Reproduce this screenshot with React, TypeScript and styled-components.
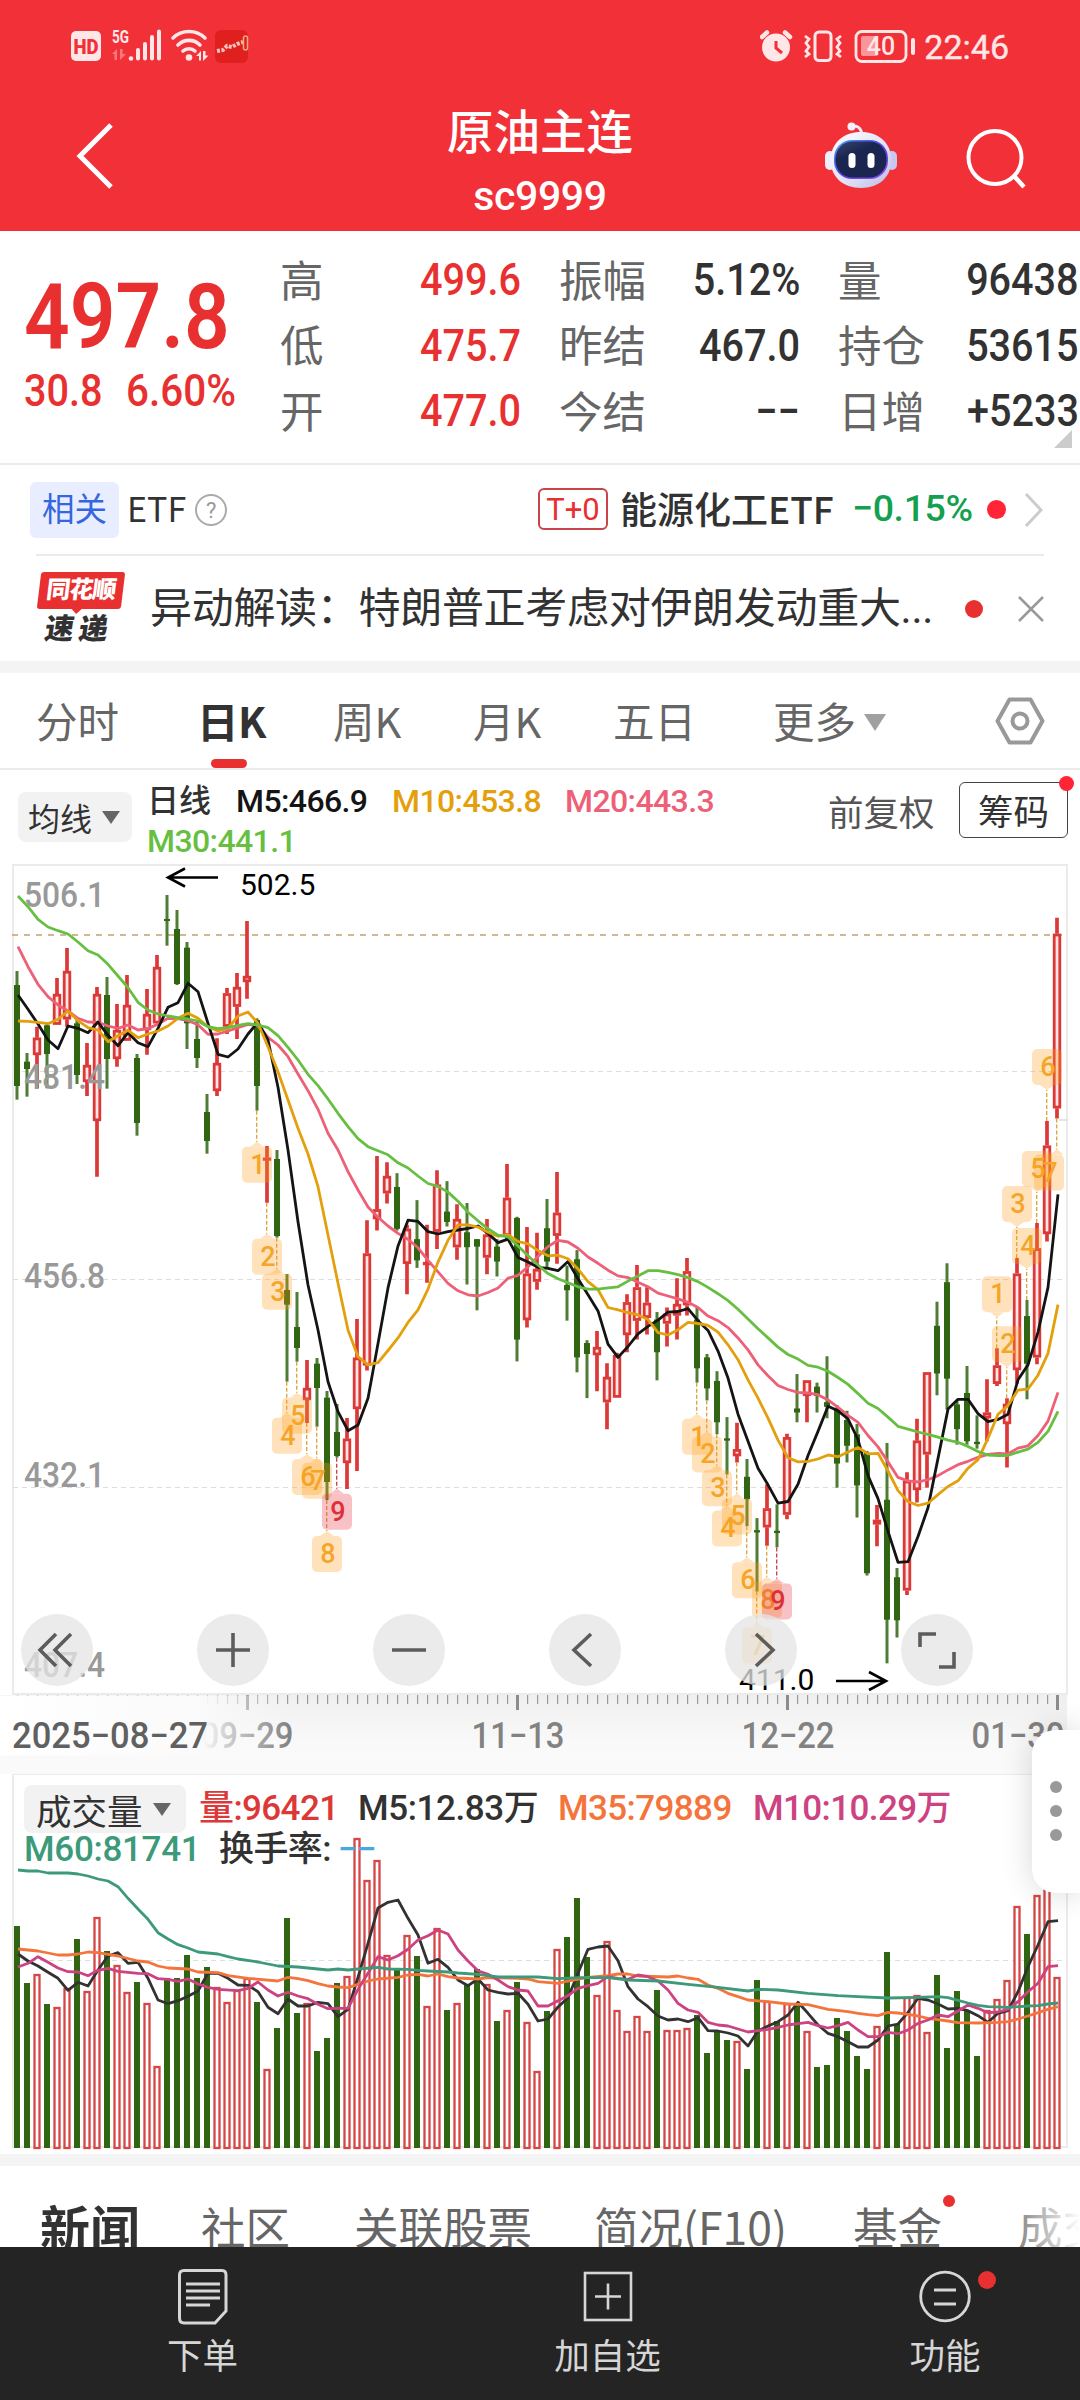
import React from 'react';
import styled, { createGlobalStyle, css } from 'styled-components';

const GlobalStyle = createGlobalStyle`
  * {
    box-sizing: border-box;
  }

  body {
    margin: 0;
    background: #fff;
    font-family: Roboto, 'Noto Sans CJK SC', sans-serif;
    color: #323232;
  }
`;

const colors = {
  brand: '#f23038',
  red: '#e93030',
  candleRed: '#dc3838',
  candleGreen: '#306612',
  down: '#15a050',
  text: '#323232',
  muted: '#666',
  line: '#ebebeb',
  band: '#f4f4f4',
  m5: '#141414',
  m10: '#e3a00c',
  m20: '#ee6077',
  m30: '#67bf42',
  vol5: '#323232',
  vol35: '#f4743b',
  vol10: '#cd4280',
  vol60: '#3c9a7a',
};

/* ---------- chart data ---------- */

type Candle = { up: boolean; high: number; top: number; bottom: number; low: number };

const EARLY_UNIT = 1 / 3;
const LATE_UNIT = 900 / 1568;
// number of sessions stored in the finer unit
const SPLIT = 35;

const EARLY_CANDLES = `G 363 405 708 749|G 609 635 657 740|R 530 563 615 715|G 520 526 612 715|R 384 432 524 524
R 294 363 508 530|G 510 520 675 702|R 579 645 696 738|R 411 432 813 980|G 381 435 627 716
R 462 540 627 650|R 375 465 572 572|G 612 624 819 857|R 417 492 540 614|R 315 351 520 520
G 135 207 213 287|G 180 237 402 405|G 276 293 520 597|G 515 567 624 654|G 732 786 873 911
R 565 639 723 738|R 414 430 530 552|R 369 411 470 567|R 213 378 396 446|G 505 510 708 782
R 888 923 931 1058|G 900 927 1158 1163|G 1272 1320 1364 1595|G 1326 1431 1494 1535|R 1530 1614 1650 1719
G 1524 1541 1614 1730|G 1623 1643 1896 1950|G 1662 1746 1818 1823|R 1704 1766 1839 1917|R 1407 1523 1677 1863`;

const LATE_CANDLES = `R 645 703 898 907|R 533 626 643 663|R 544 568 598 616|G 563 587 660 663|R 653 660 721 774
G 610 678 715 728|R 653 718 723 754|R 558 583 665 695|G 577 630 648 656|R 617 643 692 714
G 615 666 692 757|G 678 678 691 802|R 643 670 710 739|G 678 691 717 743|R 547 606 672 680
G 639 641 853 891|R 657 738 819 832|R 667 730 752 766|G 608 659 717 728|R 561 632 672 721
G 724 758 767 820|G 697 713 884 910|G 854 859 878 955|R 838 866 880 943|R 894 918 962 1009
R 876 880 954 954|R 774 788 845 875|R 723 762 820 853|R 762 789 815 844|G 805 818 875 924
R 797 808 825 865|R 746 791 811 853|R 711 734 793 811|G 797 818 903 928|G 878 884 938 959
G 908 925 997 1018|G 988 1025 1029 1088|R 998 1044 1056 1067|G 1061 1092 1131 1178|G 1164 1185 1189 1292
R 1105 1147 1180 1212|G 1140 1186 1190 1215|R 1017 1023 1158 1166|G 913 973 980 997|R 924 924 951 997
G 928 935 951 980|G 882 962 970 990|G 967 972 1069 1111|G 977 993 1038 1067|G 1000 1018 1107 1163
G 1047 1050 1260 1264|R 1141 1167 1175 1213|G 1033 1132 1341 1417|G 1251 1267 1342 1372|R 1084 1099 1290 1298
R 991 1029 1115 1137|R 910 910 1053 1111|G 787 829 912 950|G 720 753 921 975|G 958 966 1009 1036
G 899 946 1030 1036|G 985 1031 1035 1043|R 922 980 990 1030|R 868 898 930 934|R 955 965 1000 1076
R 711 738 906 930|G 784 812 895 957|R 650 694 884 896|R 472 515 669 682|R 118 146 450 468`;

const parseCandles = (source: string, unit: number): Candle[] =>
  source.split(/[|\n]/).map((row) => {
    const [side, ...values] = row.trim().split(' ');
    const [high, top, bottom, low] = values.map((v) => Number(v) * unit);
    return { up: side === 'R', high, top, bottom, low };
  });

const CANDLES = [...parseCandles(EARLY_CANDLES, EARLY_UNIT), ...parseCandles(LATE_CANDLES, LATE_UNIT)];

const AVERAGES = [
  {
    color: colors.m20,
    values: [
      290, 350, 403, 440, 465, 483, 505, 516, 517, 528, 535, 525, 540, 536, 522, 505, 506, 512, 524, 553, 552, 543, 533,
      523, 528, 562, 585, 620, 672, 722, 778, 850, 900, 965, 1020, 622, 640, 655, 668, 678, 693, 715, 735, 755, 768,
      775, 777, 771, 763, 746, 741, 726, 708, 691, 680, 683, 694, 709, 720, 732, 742, 745, 753, 761, 772, 777, 782, 788,
      797, 812, 820, 832, 850, 871, 897, 916, 933, 940, 945, 946, 949, 958, 971, 985, 997, 1020, 1040, 1066, 1093, 1099,
      1101, 1097, 1090, 1080, 1071, 1065, 1058, 1053, 1051, 1052, 1042, 1038, 1020, 995, 945,
    ],
  },
  {
    color: colors.m5,
    values: [
      435, 478, 522, 570, 596, 528, 535, 548, 516, 556, 587, 548, 578, 590, 535, 472, 458, 400, 425, 520, 613, 621, 597,
      552, 517, 570, 712, 900, 1115, 1305, 1440, 1595, 1685, 1742, 1725, 955, 860, 763, 690, 645, 647, 665, 669, 665,
      662, 659, 655, 668, 684, 678, 710, 718, 727, 729, 733, 717, 747, 775, 803, 861, 884, 865, 843, 830, 819, 805, 804,
      799, 820, 837, 873, 920, 983, 1030, 1077, 1106, 1138, 1135, 1105, 1055, 1013, 969, 977, 991, 1027, 1090, 1130,
      1187, 1241, 1240, 1196, 1146, 1060, 974, 957, 957, 982, 996, 992, 983, 923, 897, 840, 762, 600,
    ],
  },
  {
    color: colors.m10,
    values: [
      513, 514, 517, 521, 508, 483, 512, 533, 540, 575, 557, 541, 563, 552, 543, 528, 505, 490, 505, 530, 543, 535, 498,
      486, 520, 590, 665, 750, 835, 912, 1010, 1155, 1300, 1440, 1520, 897, 893, 872, 850, 823, 801, 765, 718, 680, 653,
      653, 657, 666, 673, 670, 682, 686, 698, 707, 706, 712, 730, 752, 766, 797, 801, 806, 810, 818, 841, 845, 836, 823,
      825, 828, 840, 862, 888, 923, 955, 990, 1028, 1059, 1066, 1065, 1061, 1054, 1057, 1049, 1041, 1052, 1051, 1082,
      1116, 1135, 1142, 1138, 1123, 1109, 1099, 1077, 1062, 1025, 983, 968, 941, 939, 915, 877, 792,
    ],
  },
  {
    color: colors.m30,
    values: [
      138, 170, 208, 231, 242, 252, 276, 302, 315, 343, 378, 413, 457, 480, 492, 498, 503, 507, 513, 530, 536, 533, 526,
      521, 525, 533, 557, 592, 630, 673, 707, 747, 790, 830, 866, 517, 524, 531, 545, 554, 568, 581, 586, 596, 612, 631,
      646, 660, 671, 674, 690, 707, 723, 738, 747, 754, 761, 765, 765, 763, 761, 751, 742, 733, 733, 736, 740, 745, 752,
      762, 773, 785, 800, 817, 834, 850, 866, 879, 887, 898, 901, 908, 919, 931, 947, 964, 973, 988, 1004, 1009, 1014,
      1018, 1023, 1028, 1032, 1039, 1048, 1054, 1055, 1055, 1049, 1044, 1032, 1013, 978,
    ],
  },
];

const VOLUMES = [
  498, 669, 642, 732, 741, 684, 537, 693, 471, 573, 615, 696, 666, 729, 918, 654, 654, 585, 654, 621, 681, 726, 690,
  654, 726, 927, 804, 474, 759, 729, 873, 834, 669, 648, 234, 360, 300, 585, 627, 525, 588, 738, 504, 750, 729, 672,
  627, 672, 783, 750, 666, 786, 933, 753, 567, 531, 414, 591, 705, 543, 750, 813, 768, 813, 690, 810, 810, 804, 765,
  879, 816, 840, 843, 927, 660, 723, 783, 729, 732, 813, 921, 915, 774, 813, 888, 927, 798, 576, 792, 711, 705, 816,
  645, 864, 693, 750, 888, 750, 717, 660, 438, 522, 405, 384, 651,
];

// "session,value" pairs
const VOLUME_LINES = [
  {
    color: colors.vol5,
    points:
      '0,582 1,603 2,618 3,637 4,655 5,691 6,667 7,678 8,630 9,588 10,578 11,610 12,607 13,655 14,720 15,731 16,722 17,709 18,693 19,640 20,640 21,655 22,675 23,676 24,695 25,742 26,761 27,717 28,738 29,738 30,727 31,731 32,770 33,748 34,652 35,550 36,444 37,427 38,420 39,475 40,525 41,610 42,598 43,622 44,660 45,677 46,657 47,690 48,697 49,702 50,700 51,733 52,783 53,777 54,741 55,713 56,640 57,568 58,561 59,558 60,602 61,680 62,717 63,740 64,768 65,780 66,777 67,785 68,773 69,812 70,813 71,819 72,828 73,858 74,813 75,798 76,785 77,765 78,727 79,760 80,795 81,820 82,830 83,845 84,861 85,861 86,840 87,798 88,792 89,757 90,715 91,720 92,732 93,747 94,745 95,752 96,767 97,787 98,760 99,752 100,695 101,620 102,555 103,485 104,482',
  },
  {
    color: colors.vol35,
    points:
      '0,567 2,573 4,585 5,585 6,582 7,576 8,578 9,583 10,588 12,603 13,606 14,618 15,624 17,627 18,636 20,638 21,647 23,655 26,663 27,652 28,656 29,662 30,671 31,678 32,681 33,683 34,673 35,663 36,657 38,652 39,645 40,643 41,648 42,642 43,650 44,654 46,657 47,653 50,655 51,657 52,665 54,670 55,663 57,652 59,647 60,642 61,642 62,648 65,651 66,648 67,654 68,658 69,675 70,685 71,700 72,710 73,720 75,725 77,732 79,734 81,748 83,755 84,760 85,764 86,767 87,757 88,759 89,763 90,768 91,775 93,783 94,788 96,789 98,787 99,785 100,777 101,768 102,758 103,748 104,740',
  },
  {
    color: colors.vol10,
    points:
      '0,621 1,610 2,590 3,607 4,624 5,635 6,636 7,647 8,631 9,625 10,634 12,640 13,641 14,656 15,658 16,664 17,657 18,672 19,682 20,688 22,692 23,685 24,666 25,690 26,708 27,697 28,708 29,716 30,733 31,746 32,745 33,745 34,688 35,640 36,590 37,600 38,587 39,568 40,540 41,527 42,510 43,522 44,570 45,603 46,632 47,643 48,660 49,680 50,690 51,693 52,738 53,738 54,722 55,707 56,685 57,677 58,670 59,650 60,655 61,658 62,645 63,650 64,663 65,690 66,730 67,750 68,757 69,787 70,795 71,798 72,807 73,816 74,812 75,808 76,802 77,795 78,791 79,787 80,797 81,804 82,797 83,787 84,810 85,830 86,830 87,817 88,821 89,810 90,790 91,780 92,765 93,770 94,753 95,735 96,745 97,758 98,756 99,748 100,725 101,695 102,670 103,620 104,617',
  },
  {
    color: colors.vol60,
    points:
      '0,330 1,333 2,333 3,339 5,339 6,342 7,348 8,357 9,363 10,380 11,415 12,447 13,478 14,518 15,537 16,554 17,564 18,576 20,582 21,590 22,597 24,606 25,612 26,618 28,621 30,627 31,630 32,627 33,630 34,627 36,622 37,627 39,628 40,631 41,633 43,636 44,639 46,643 48,651 52,651 54,656 56,653 59,653 61,660 64,663 67,673 70,682 73,693 74,688 76,690 79,700 82,707 84,710 87,714 90,712 92,710 93,713 94,721 95,729 96,736 97,740 99,742 101,738 102,737 103,732 104,729',
  },
];

type Marker = { index: number; label: string; above?: boolean; hot?: boolean };

const MARKERS: Marker[] = [
  ...[24, 25, 26, 27, 28, 29, 30, 31, 32].map((index, n) => ({ index, label: String(n + 1), hot: n === 8 })),
  ...[68, 69, 70, 71, 72, 73, 74, 75, 76].map((index, n) => ({ index, label: String(n + 1), hot: n === 8 })),
  ...[98, 99, 100, 101, 102, 103].map((index, n) => ({ index, label: String(n + 1), above: true })),
  { index: 104, label: '7' },
];

const xAt = (index: number) => 17 + index * 10;

/* ---------- header ---------- */

const Page = styled.div`
  position: relative;
  display: flex;
  flex-direction: column;
  width: 1080px;
  height: 2400px;
  overflow: hidden;
  background: #fff;
`;

const Header = styled.header`
  height: 231px;
  background: ${colors.brand};
  color: #fff;
`;

const StatusBar = styled.div`
  display: flex;
  align-items: center;
  justify-content: space-between;
  height: 94px;
  padding: 0 71px 0 71px;
`;

const StatusGroup = styled.div<{ $gap: number }>`
  display: flex;
  align-items: center;
  gap: ${({ $gap }) => $gap}px;
`;

const Clock = styled.span`
  font-size: 34px;
  line-height: 34px;
  color: #ffe6e7;
  -webkit-text-stroke: 0.4px #ffe6e7;
`;

const TitleBar = styled.div`
  display: grid;
  grid-template-columns: 360px 360px 360px;
  height: 137px;
`;

const TitleBlock = styled.div`
  display: flex;
  flex-direction: column;
  align-items: center;
`;

const Title = styled.h1`
  margin: 11px 0 0;
  font-size: 46.5px;
  line-height: 56px;
  font-weight: 500;
`;

const Code = styled.div`
  margin-top: 12px;
  font-size: 41px;
  line-height: 46px;
  font-weight: 500;
  letter-spacing: -0.4px;
`;

const BackSlot = styled.div`
  padding: 27px 0 0 74px;
`;

const ActionSlot = styled.div`
  display: flex;
  gap: 66px;
  padding: 27px 0 0 104px;
`;

/* ---------- quote ---------- */

const Quote = styled.section`
  position: relative;
  display: grid;
  grid-template-columns: 255px 266px 279px 279px;
  width: 1080px;
  height: 232px;
  padding-top: 17px;
`;

const PriceBlock = styled.div`
  padding: 19px 0 0 24px;
  color: ${colors.red};
  white-space: nowrap;
`;

const Figure = styled.span<{ $align?: 'left' | 'right'; $squeeze?: number }>`
  display: inline-block;
  transform: scaleX(${({ $squeeze }) => $squeeze ?? 0.91});
  transform-origin: ${({ $align }) => $align ?? 'left'} center;
`;

const LastPrice = styled.div`
  height: 102px;
  font-size: 90px;
  line-height: 102px;
  font-weight: 600;
`;

const Change = styled.div`
  display: flex;
  margin-top: -2px;
  font-size: 43.5px;
  line-height: 50px;
  font-weight: 500;

  span + span {
    margin-left: 16px;
  }
`;

const StatColumn = styled.div<{ $indent: number }>`
  display: flex;
  flex-direction: column;
  padding-left: ${({ $indent }) => $indent}px;
`;

const Stat = styled.div`
  display: flex;
  align-items: center;
  justify-content: space-between;
  height: 65.5px;
  white-space: nowrap;
`;

const StatLabel = styled.span`
  color: ${colors.muted};
  font-family: 'Noto Sans CJK SC', sans-serif;
  font-size: 43.5px;
  line-height: 60px;
  margin-top: -4px;
`;

const StatValue = styled(Figure)<{ $up?: boolean }>`
  margin-top: 1px;
  color: ${({ $up }) => ($up ? colors.red : colors.text)};
  font-size: 43.5px;
  font-weight: 500;
  line-height: 52px;
`;

const Corner = styled.i`
  position: absolute;
  right: 8px;
  bottom: 15px;
  border-left: 18px solid transparent;
  border-bottom: 18px solid #ccc;
`;

/* ---------- related rows ---------- */

const EtfRow = styled.section`
  display: flex;
  align-items: center;
  height: 91px;
  padding: 0 36px 0 30px;
  border-top: 2px solid ${colors.line};
`;

const Tag = styled.span`
  width: 89px;
  height: 56px;
  border-radius: 6px;
  background: #e8eeff;
  color: #3566e0;
  font-size: 32.5px;
  line-height: 56px;
  text-align: center;
`;

const EtfLabel = styled.span`
  margin: 0 9px 0 8px;
  font-family: 'Noto Sans CJK SC', sans-serif;
  font-size: 34px;
  line-height: 40px;
  margin-top: -3px;
`;

const Help = styled.span`
  width: 32px;
  height: 32px;
  border: 2px solid #aaa;
  border-radius: 50%;
  color: #999;
  font-size: 22px;
  line-height: 29px;
  text-align: center;
`;

const TradeMode = styled.span`
  width: 70px;
  height: 42px;
  margin: -2px 0 0 auto;
  border: 2px solid #c9444a;
  border-radius: 6px;
  color: ${colors.red};
  font-size: 31px;
  line-height: 39px;
  text-align: center;
`;

const EtfName = styled.span`
  width: 222px;
  margin: -3px 0 0 12px;
  font-family: 'Noto Sans CJK SC', sans-serif;
  font-size: 37px;
  font-weight: 500;
  line-height: 50px;
  white-space: nowrap;
`;

const EtfChange = styled.span`
  width: 135px;
  margin: -4px 0 0 10px;
  color: ${colors.down};
  font-size: 37.5px;
  font-weight: 500;
  line-height: 40px;
  letter-spacing: -0.4px;
`;

const Dot = styled.i<{ $size: number; $color?: string }>`
  flex: none;
  width: ${({ $size }) => $size}px;
  height: ${({ $size }) => $size}px;
  border-radius: 50%;
  background: ${({ $color }) => $color ?? colors.red};
`;

const NewsRow = styled.section`
  display: flex;
  align-items: center;
  height: 107px;
  margin: 0 36px;
  border-top: 2px solid ${colors.line};
`;

const Logo = styled.div`
  width: 90px;
  height: 74px;
`;

const LogoTop = styled.div`
  position: relative;
  width: 84px;
  height: 37px;
  margin-left: 3px;
  border-radius: 3px;
  background: ${colors.red};
  color: #fff;
  font-size: 24px;
  font-weight: 900;
  letter-spacing: -1px;
  line-height: 36px;
  text-align: center;
  transform: skewX(-7deg);

  &::after {
    content: '';
    position: absolute;
    left: 34px;
    top: 36px;
    border: 6px solid transparent;
    border-top-color: ${colors.red};
  }
`;

const LogoBottom = styled.div`
  margin-top: 5px;
  padding-left: 9px;
  font-size: 29px;
  font-weight: 900;
  letter-spacing: 5px;
  line-height: 30px;
  transform: skewX(-9deg);
`;

const Headline = styled.p`
  width: 786px;
  margin: 0 0 0 24px;
  font-size: 42px;
  letter-spacing: -0.3px;
  line-height: 60px;
  white-space: nowrap;
`;

const Band = styled.div`
  height: 12px;
  background: ${colors.band};
`;

/* ---------- period tabs ---------- */

const Tabs = styled.nav`
  display: flex;
  align-items: center;
  height: 97px;
  padding: 0 35px 0 36px;
  border-bottom: 2px solid ${colors.line};
`;

const Tab = styled.div<{ $width: number; $active?: boolean }>`
  position: relative;
  width: ${({ $width }) => $width}px;
  color: ${({ $active }) => ($active ? colors.text : colors.muted)};
  font-family: 'Noto Sans CJK SC', sans-serif;
  font-size: 41.5px;
  font-weight: ${({ $active }) => ($active ? 700 : 400)};
  line-height: 95px;
  white-space: nowrap;

  ${({ $active }) =>
    $active &&
    css`
      letter-spacing: -0.5px;

      &::after {
        content: '';
        position: absolute;
        left: 14px;
        bottom: 0;
        width: 36px;
        height: 9px;
        border-radius: 5px;
        background: ${colors.red};
      }
    `}
`;

const Caret = styled.i<{ $size: number; $color: string; $left: number; $lift?: number }>`
  position: relative;
  top: ${({ $lift }) => -($lift ?? 0)}px;
  display: inline-block;
  flex: none;
  margin-left: ${({ $left }) => $left}px;
  border: ${({ $size }) => $size}px solid transparent;
  border-top: ${({ $size }) => $size * 1.5}px solid ${({ $color }) => $color};
  border-bottom: 0;
  vertical-align: middle;
`;

/* ---------- moving average bar ---------- */

const AverageBar = styled.section`
  display: flex;
  align-items: flex-start;
  height: 94px;
  padding: 0 12px 0 18px;
`;

const Picker = styled.button<{ $width: number; $height: number; $size: number; $indent: number }>`
  display: flex;
  align-items: center;
  flex: none;
  width: ${({ $width }) => $width}px;
  height: ${({ $height }) => $height}px;
  padding: 0 0 0 ${({ $indent }) => $indent}px;
  border: 0;
  border-radius: 8px;
  background: #f2f2f2;
  color: ${colors.text};
  font: ${({ $size }) => $size}px 'Noto Sans CJK SC', sans-serif;
`;

const Legend = styled.div`
  display: flex;
  flex-wrap: wrap;
  align-content: flex-start;
  width: 640px;
  margin: 11px 0 0 15px;
`;

const LegendItem = styled.span<{ $color?: string; $width: number; $size?: number; $tight?: number }>`
  width: ${({ $width }) => $width}px;
  color: ${({ $color }) => $color ?? colors.text};
  font-size: ${({ $size }) => $size ?? 32}px;
  font-weight: 500;
  letter-spacing: ${({ $tight }) => $tight ?? -0.6}px;
  line-height: 40px;
  white-space: nowrap;
`;

const Adjust = styled.span`
  width: 131px;
  margin: 16px 0 0 auto;
  color: #555;
  font-family: 'Noto Sans CJK SC', sans-serif;
  font-size: 35.5px;
  line-height: 50px;
  white-space: nowrap;
`;

const ChipButton = styled.button`
  position: relative;
  width: 109px;
  height: 56px;
  margin-top: 12px;
  padding: 0;
  border: 1.5px solid #444;
  border-radius: 6px;
  background: #fff;
  color: ${colors.text};
  font: 35.5px/52px 'Noto Sans CJK SC', sans-serif;

  i {
    position: absolute;
    top: -7px;
    right: -7px;
  }
`;

/* ---------- charts ---------- */

const PricePanel = styled.section`
  position: relative;
  height: 910px;

  svg {
    display: block;
  }
`;

const ControlRow = styled.div`
  position: absolute;
  left: 21px;
  top: 750px;
  display: flex;
  gap: 104px;
`;

const RoundButton = styled.button`
  display: flex;
  align-items: center;
  justify-content: center;
  width: 72px;
  height: 72px;
  padding: 0;
  border: 0;
  border-radius: 50%;
  background: rgba(229, 229, 229, 0.76);
`;

const VolumePanel = styled.section`
  position: relative;
  height: 380px;
`;

const VolumeSvg = styled.svg`
  position: absolute;
  left: 0;
  top: 0;
`;

const VolumeLegend = styled.div`
  position: relative;
  display: flex;
  flex-wrap: wrap;
  align-items: center;
  width: 1040px;
  padding: 11px 0 0 24px;
`;

const VolumeLegendRow = styled.div<{ $lift?: number }>`
  display: flex;
  align-items: center;
  width: 100%;
  margin-top: ${({ $lift }) => -($lift ?? 0)}px;
`;

const SideHandle = styled.aside`
  position: absolute;
  right: 0;
  top: 1730px;
  display: flex;
  flex-direction: column;
  align-items: center;
  justify-content: center;
  gap: 12px;
  width: 48px;
  height: 163px;
  padding-bottom: 2px;
  border-radius: 24px 0 0 24px;
  background: #fff;
  box-shadow: 0 0 32px rgba(0, 0, 0, 0.16);
`;

/* ---------- footer ---------- */

const InfoTabs = styled.nav`
  position: relative;
  display: flex;
  height: 81px;
  padding-left: 40px;
  overflow: hidden;

  &::after {
    content: '';
    position: absolute;
    right: 0;
    top: 0;
    width: 72px;
    height: 100%;
    background: linear-gradient(to right, rgba(255, 255, 255, 0.1), #fff);
  }
`;

const InfoTab = styled.span<{ $width: number; $active?: boolean }>`
  position: relative;
  flex: none;
  width: ${({ $width }) => $width}px;
  padding-top: 28px;
  color: ${({ $active }) => ($active ? colors.text : colors.muted)};
  font-family: 'Noto Sans CJK SC', sans-serif;
  font-size: ${({ $active }) => ($active ? 50 : 44.5)}px;
  font-weight: ${({ $active }) => ($active ? 700 : 400)};
  line-height: 64px;
  white-space: nowrap;

  i {
    position: absolute;
    left: 90px;
    top: 29px;
  }
`;

const BottomBar = styled.footer`
  display: grid;
  grid-template-columns: 405px 405px 270px;
  height: 153px;
  background: #242424;
`;

const BottomItem = styled.div`
  position: relative;
  display: flex;
  flex-direction: column;
  align-items: center;
  padding-top: 21px;
  color: #d6d6d6;
  font-size: 35.5px;
  line-height: 44px;

  svg {
    margin-bottom: 9px;
  }

  i {
    position: absolute;
    left: 168px;
    top: 24px;
  }
`;

/* ---------- drawings ---------- */

const StatusLeftIcons = () => (
  <svg width="180" height="36" viewBox="71 30 180 36" fill="#ffe6e7">
    <rect x="71" y="32" width="30" height="30" rx="5" />
    <text
      x="73.500"
      y="54.500"
      fontSize="20"
      fontWeight="900"
      fill={colors.brand}
      textLength="25"
      lengthAdjust="spacingAndGlyphs"
    >
      HD
    </text>
    <text x="112" y="44" fontSize="18" fontWeight="700" textLength="17" lengthAdjust="spacingAndGlyphs">
      5G
    </text>
    <g opacity="0.4">
      <path d="M112 55l5-5v11h-2.500v-6zM120 50v11l6-6h-3.500v-5z" />
    </g>
    <circle cx="131" cy="59.500" r="2.300" />
    <rect x="136" y="49" width="4" height="12.500" rx="2" />
    <rect x="143" y="43" width="4" height="18.500" rx="2" />
    <rect x="150" y="36" width="4" height="25.500" rx="2" />
    <rect x="157" y="30.500" width="4" height="31" rx="2" />
    <g fill="none" stroke="#ffe6e7" strokeWidth="3.600" strokeLinecap="round">
      <path d="M173 39a23 23 0 0 1 32 0" />
      <path d="M178 46a15.500 15.500 0 0 1 22 0" />
      <path d="M183 52a9 9 0 0 1 12 0" />
    </g>
    <circle cx="189" cy="58.500" r="3.300" />
    <path d="M196 57l5-5v9.500h-2v-4.500zM203 52v10l5.500-5.500h-3v-4.500z" />
    <rect x="215" y="31" width="33" height="33" rx="6" fill="#e01f1f" />
    <path d="M217 52l6-1 4-4 5 1 5-3 6-2" fill="none" stroke="#f8c4bb" strokeWidth="4" strokeDasharray="3 1.500" />
    <rect x="243.500" y="37" width="4" height="14" rx="2" fill="none" stroke="#f4a77c" strokeWidth="1.500" />
  </svg>
);

const StatusRightIcons = () => (
  <svg width="156" height="36" viewBox="760 29 156 36" fill="none" stroke="#ffe6e7">
    <circle cx="776" cy="47.500" r="14" fill="#ffe6e7" stroke="none" />
    <path d="M762 37l5-4.500M790 37l-5-4.500" strokeWidth="4.500" strokeLinecap="round" />
    <path d="M776 41v7l6 5" stroke={colors.brand} strokeWidth="3" />
    <rect x="815" y="32" width="16" height="28.500" rx="4" strokeWidth="3" />
    <path d="M805 36l4 3-3 4 3 4-3 4 3 3-4 3M841 36l-4 3 3 4-3 4 3 4-3 3 4 3" strokeWidth="2.800" />
    <rect x="856" y="31.500" width="50" height="30" rx="6" strokeWidth="2.800" />
    <rect x="861" y="36" width="17" height="20" rx="2" fill="#fa959a" stroke="none" />
    <rect x="911" y="38" width="4" height="17" rx="2" fill="#ffe6e7" stroke="none" />
    <text x="881" y="55" fontSize="25" fontWeight="500" fill="#ffe6e7" stroke="none" textAnchor="middle">
      40
    </text>
  </svg>
);

const Robot = () => (
  <svg width="74" height="70" viewBox="0 0 74 70">
    <defs>
      <linearGradient id="shell" x1="0" y1="0" x2="1" y2="1">
        <stop offset="0" stopColor="#fff" />
        <stop offset="0.600" stopColor="#dfe0f5" />
        <stop offset="1" stopColor="#b9b8e4" />
      </linearGradient>
      <linearGradient id="visor" x1="0" y1="0" x2="1" y2="1">
        <stop offset="0" stopColor="#46a6ff" />
        <stop offset="0.500" stopColor="#5a3fe0" />
        <stop offset="1" stopColor="#8c4af0" />
      </linearGradient>
      <linearGradient id="glass" x1="0" y1="0" x2="0.600" y2="1">
        <stop offset="0" stopColor="#3a4570" />
        <stop offset="0.400" stopColor="#1b2650" />
        <stop offset="1" stopColor="#1b2650" />
      </linearGradient>
    </defs>
    <path d="M28 5q9-1 10 9" fill="none" stroke="#ecebfa" strokeWidth="3" />
    <circle cx="27.500" cy="5.500" r="4" fill="#f3f2fc" />
    <rect x="1" y="30" width="10" height="19" rx="5" fill="#eeeefb" />
    <rect x="63" y="30" width="10" height="19" rx="5" fill="#c8c8ee" />
    <path
      d="M37 11C54 11 66 21 67.500 37C68 56 55 67 37 67C19 67 6 56 6.500 37C8 21 20 11 37 11Z"
      fill="url(#shell)"
    />
    <rect x="10" y="19" width="54" height="39" rx="18" fill="url(#visor)" />
    <rect x="11.500" y="20.500" width="51" height="36" rx="17" fill="url(#glass)" />
    <rect x="24.500" y="32" width="7" height="15" rx="3.500" fill="#fff" />
    <rect x="43.500" y="32" width="7" height="15" rx="3.500" fill="#fff" />
  </svg>
);

const CandleShape = ({ candle, x }: { candle: Candle; x: number }) => {
  const height = Math.max(candle.bottom - candle.top, 1.5);
  if (!candle.up) {
    return (
      <g fill={colors.candleGreen}>
        <rect x={x - 1.5} y={candle.high} width={3} height={candle.low - candle.high} opacity={0.85} />
        <rect x={x - 3} y={candle.top} width={6} height={height} />
      </g>
    );
  }
  return (
    <g stroke={colors.candleRed}>
      <path d={`M${x} ${candle.high}V${candle.top}M${x} ${candle.bottom}V${candle.low}`} strokeWidth={3.7} />
      <rect
        x={x - 2.8}
        y={candle.top + 1.2}
        width={5.6}
        height={Math.max(height - 2.4, 0.5)}
        fill="#ffe4e4"
        strokeWidth={2.8}
      />
    </g>
  );
};

const MarkerShape = ({ index, label, above, hot }: Marker) => {
  const x = xAt(index);
  const { high, low } = CANDLES[index];
  const from = above ? high : low;
  const tip = above ? high - 31 : low + 31;
  const dir = above ? -1 : 1;
  const left = Math.min(x - 15, 1034);
  const bodyTop = above ? tip - 41 : tip + 5;
  const fill = hot ? '#e62e3c' : '#ff9f1a';
  return (
    <g>
      <path
        d={`M${x - 0.3} ${from}V${tip}`}
        stroke={hot ? '#c8394a' : '#d8a43c'}
        strokeWidth={1.3}
        strokeDasharray="4 2"
      />
      <g fill={fill} opacity={0.29}>
        <rect x={left} y={bodyTop} width={30} height={36} rx={5} />
        <path d={`M${x - 7} ${tip + 5 * dir}L${x} ${tip}L${Math.min(x + 7, 1064)} ${tip + 5 * dir}Z`} />
      </g>
      <text
        x={left + 16}
        y={bodyTop + 27}
        fontSize={27}
        fontWeight={500}
        fill={hot ? '#de3038' : '#f5a528'}
        textAnchor="middle"
      >
        {label}
      </text>
    </g>
  );
};

const GRID = [
  { y: 221.5, label: '481.4', labelY: 239 },
  { y: 429.5, label: '456.8', labelY: 437.5 },
  { y: 637.5, label: '432.1', labelY: 637 },
];

const DATES = [
  { x: 247, label: '09−29' },
  { x: 518, label: '11−13' },
  { x: 788, label: '12−22' },
  { x: 1018, label: '01−30' },
];

const PriceLabel = ({ y, children }: { y: number; children: string }) => (
  <text x="24" y={y} fontSize="35.500" fontWeight="500" fill="#999" textLength="81" lengthAdjust="spacingAndGlyphs">
    {children}
  </text>
);

const PriceChart = () => (
  <svg width="1080" height="910" viewBox="0 14 1080 910">
    <defs>
      <linearGradient id="axis" x1="0" y1="0" x2="0" y2="1">
        <stop offset="0" stopColor="#efefef" />
        <stop offset="0.600" stopColor="#f9f9f9" />
        <stop offset="1" stopColor="#fafafa" />
      </linearGradient>
      <linearGradient id="axisFade" x1="0" y1="0" x2="1" y2="0">
        <stop offset="0" stopColor="#fff" />
        <stop offset="0.700" stopColor="#fafafa" />
        <stop offset="0.780" stopColor="#fafafa" stopOpacity="0.650" />
        <stop offset="1" stopColor="#fafafa" stopOpacity="0" />
      </linearGradient>
    </defs>
    <rect x="0" y="845" width="1067" height="80" fill="url(#axis)" />
    <rect x="13" y="15" width="1054" height="829" fill="none" stroke={colors.line} strokeWidth="2" />
    {GRID.map(({ y }) => (
      <path key={y} d={`M13 ${y}H1067`} stroke="#dedede" strokeWidth="1.200" strokeDasharray="5 4" />
    ))}
    <path d="M1059 270H1067" stroke="#ddd" strokeWidth="1.500" />
    <path d="M12 85H1067" stroke="#c6a06c" strokeWidth="1.700" strokeDasharray="6 6" />

    {CANDLES.map((candle, i) => (
      <CandleShape key={i} candle={candle} x={xAt(i)} />
    ))}

    <PriceLabel y={57}>506.1</PriceLabel>
    {GRID.map(({ label, labelY }) => (
      <PriceLabel key={label} y={labelY}>
        {label}
      </PriceLabel>
    ))}
    <PriceLabel y={827}>407.4</PriceLabel>

    {MARKERS.map((marker) => (
      <MarkerShape key={marker.index} {...marker} />
    ))}

    {AVERAGES.map(({ color, values }) => (
      <polyline
        key={color}
        points={values.map((v, i) => `${xAt(i) + 1},${(v * (i < SPLIT ? EARLY_UNIT : LATE_UNIT)).toFixed(1)}`).join(' ')}
        fill="none"
        stroke={color}
        strokeWidth="2.800"
        strokeLinejoin="round"
      />
    ))}

    <g fill="none" stroke="#000" strokeWidth="2.600">
      <path d="M218 27.500H168M185 18.500L168 27.500L185 36.500" />
      <path d="M836 831H886M869 822L886 831L869 840" />
    </g>
    <g fontSize="30" fill="#000">
      <text x="240" y="45">
        502.5
      </text>
      <text x="739" y="840">
        411.0
      </text>
    </g>

    {CANDLES.map((_, i) => {
      const major = (i - 23) % 27 === 0;
      return (
        <rect
          key={i}
          x={xAt(i) - (major ? 1 : 0)}
          y="845"
          width={major ? 3 : 1.2}
          height={major ? 15 : 9}
          fill={major ? '#8c8c8c' : '#999'}
        />
      );
    })}
    <g fontSize="36" fontWeight="500" fill="#828282" textAnchor="middle">
      {DATES.map(({ x, label }) => (
        <text key={label} x={x} y="898" textLength="93" lengthAdjust="spacingAndGlyphs">
          {label}
        </text>
      ))}
    </g>
    <rect x="0" y="845.500" width="290" height="60" fill="url(#axisFade)" />
    <text x="12" y="898" fontSize="36" fontWeight="500" fill="#606060" textLength="196" lengthAdjust="spacingAndGlyphs">
      2025−08−27
    </text>
  </svg>
);

const VOLUME_BASE = 1164 / 3;

const VolumeChart = () => (
  <VolumeSvg width="1080" height="380" viewBox="0 14 1080 380">
    <rect x="13" y="14" width="1054" height="373" fill="none" stroke={colors.line} strokeWidth="2" />
    <path d="M13 200.500H1067" stroke="#dedede" strokeWidth="1.200" strokeDasharray="5 4" />
    {VOLUMES.map((value, i) => {
      const top = value / 3;
      return CANDLES[i].up ? (
        <rect
          key={i}
          x={xAt(i) - 2.5}
          y={top + 1}
          width={5}
          height={VOLUME_BASE - top - 1}
          fill="#fff"
          stroke="#d64646"
          strokeWidth={2.3}
        />
      ) : (
        <rect key={i} x={xAt(i) - 3} y={top} width={6} height={VOLUME_BASE - top} fill={colors.candleGreen} />
      );
    })}
    {VOLUME_LINES.map(({ color, points }) => (
      <polyline
        key={color}
        points={points
          .split(' ')
          .map((pair) => {
            const [i, value] = pair.split(',').map(Number);
            return `${xAt(i) + 1},${(value / 3).toFixed(1)}`;
          })
          .join(' ')}
        fill="none"
        stroke={color}
        strokeWidth="2.800"
        strokeLinejoin="round"
      />
    ))}
  </VolumeSvg>
);

const CONTROLS = [
  'M35 20L19 36L35 52M50 20L34 36L50 52',
  'M19 36H53M36 19V53',
  'M19 36H53',
  'M42 20L25 36L42 52',
  'M31 20L48 36L31 52',
  'M19 33V20H35M53 38V53H38',
];

const STATS = [
  [
    { label: '高', value: '499.6', up: true },
    { label: '低', value: '475.7', up: true },
    { label: '开', value: '477.0', up: true },
  ],
  [
    { label: '振幅', value: '5.12%' },
    { label: '昨结', value: '467.0' },
    { label: '今结', value: '−−' },
  ],
  [
    { label: '量', value: '96438' },
    { label: '持仓', value: '53615' },
    { label: '日增', value: '+5233' },
  ],
];

const StatsColumns = () => (
  <>
    {STATS.map((column, n) => (
      <StatColumn key={column[0].label} $indent={n === 0 ? 25 : 38}>
        {column.map(({ label, value, ...rest }) => (
          <Stat key={label}>
            <StatLabel>{label}</StatLabel>
            <StatValue $align="right" $up={'up' in rest}>
              {value}
            </StatValue>
          </Stat>
        ))}
      </StatColumn>
    ))}
  </>
);

const EtfArrow = styled.svg`
  margin-left: 18px;
`;

const CloseIcon = styled.svg`
  margin-left: auto;
`;

const NewsDot = styled(Dot)`
  margin-left: 29px;
`;

const AveragePicker = styled(Picker)`
  margin-top: 22px;
`;

const VolumePicker = styled(Picker)`
  margin-right: 13px;
`;

const App: React.FC = () => (
  <Page lang="zh-CN">
    <GlobalStyle />
    <Header>
      <StatusBar>
        <StatusLeftIcons />
        <StatusGroup $gap={8}>
          <StatusRightIcons />
          <Clock>22:46</Clock>
        </StatusGroup>
      </StatusBar>
      <TitleBar>
        <BackSlot>
          <svg width="42" height="70" fill="none" stroke="#fff" strokeWidth="5">
            <path d="M37 4L6 35L37 66" />
          </svg>
        </BackSlot>
        <TitleBlock>
          <Title>原油主连</Title>
          <Code>sc9999</Code>
        </TitleBlock>
        <ActionSlot>
          <Robot />
          <svg width="66" height="70" fill="none" stroke="#fff" strokeWidth="4">
            <circle cx="31" cy="36.500" r="26.500" />
            <path d="M50 55L60 66" strokeWidth="4.500" />
          </svg>
        </ActionSlot>
      </TitleBar>
    </Header>

    <Quote>
      <PriceBlock>
        <LastPrice>
          <Figure $squeeze={0.89}>497.8</Figure>
        </LastPrice>
        <Change>
          <Figure>30.8</Figure>
          <Figure $squeeze={0.93}>6.60%</Figure>
        </Change>
      </PriceBlock>
      <StatsColumns />
      <Corner />
    </Quote>

    <EtfRow>
      <Tag>相关</Tag>
      <EtfLabel>ETF</EtfLabel>
      <Help>?</Help>
      <TradeMode>T+0</TradeMode>
      <EtfName>能源化工ETF</EtfName>
      <EtfChange>−0.15%</EtfChange>
      <Dot $size={19} $color="#ff2436" />
      <EtfArrow width="20" height="36" fill="none" stroke="#ccc" strokeWidth="3">
        <path d="M2 2L17 18L2 34" />
      </EtfArrow>
    </EtfRow>

    <NewsRow>
      <Logo>
        <LogoTop>同花顺</LogoTop>
        <LogoBottom>速递</LogoBottom>
      </Logo>
      <Headline>异动解读：特朗普正考虑对伊朗发动重大...</Headline>
      <NewsDot $size={18} />
      <CloseIcon width="26" height="26" fill="none" stroke="#999" strokeWidth="2.500">
        <path d="M1 1L25 25M25 1L1 25" />
      </CloseIcon>
    </NewsRow>

    <Band />

    <Tabs>
      <Tab $width={161}>分时</Tab>
      <Tab $width={136} $active>
        日K
      </Tab>
      <Tab $width={140}>周K</Tab>
      <Tab $width={140}>月K</Tab>
      <Tab $width={160}>五日</Tab>
      <Tab $width={222}>
        更多
        <Caret $size={11.5} $color="#a0a0a0" $left={8} $lift={4} />
      </Tab>
      <svg width="50" height="50" viewBox="0 0 50 50" fill="none" stroke="#999" strokeWidth="4">
        <path d="M14.500 3.500H35.500L47.500 25L35.500 46.500H14.500L2.500 25Z" strokeLinejoin="round" />
        <circle cx="25" cy="25" r="7.500" />
      </svg>
    </Tabs>

    <AverageBar>
      <AveragePicker $width={114} $height={50} $size={32} $indent={10}>
        均线
        <Caret $size={9} $color="#666" $left={10} />
      </AveragePicker>
      <Legend>
        <LegendItem $width={89} $size={32} $tight={0}>
          日线
        </LegendItem>
        <LegendItem $width={156} $color={colors.m5}>
          M5:466.9
        </LegendItem>
        <LegendItem $width={173} $color={colors.m10}>
          M10:453.8
        </LegendItem>
        <LegendItem $width={200} $color={colors.m20}>
          M20:443.3
        </LegendItem>
        <LegendItem $width={200} $color={colors.m30}>
          M30:441.1
        </LegendItem>
      </Legend>
      <Adjust>前复权</Adjust>
      <ChipButton>
        筹码
        <Dot $size={15} $color="#ff2436" />
      </ChipButton>
    </AverageBar>

    <PricePanel>
      <PriceChart />
      <ControlRow>
        {CONTROLS.map((d) => (
          <RoundButton key={d}>
            <svg width="72" height="72" fill="none" stroke="#5c5c5c" strokeWidth="3.600">
              <path d={d} />
            </svg>
          </RoundButton>
        ))}
      </ControlRow>
    </PricePanel>

    <VolumePanel>
      <VolumeChart />
      <VolumeLegend>
        <VolumeLegendRow>
          <VolumePicker $width={162} $height={48} $size={35.5} $indent={12}>
            成交量
            <Caret $size={9} $color="#666" $left={10} />
          </VolumePicker>
          <LegendItem $width={159} $size={35} $color={colors.candleRed}>
            量:96421
          </LegendItem>
          <LegendItem $width={200} $size={35} $tight={-0.4}>
            M5:12.83万
          </LegendItem>
          <LegendItem $width={195} $size={35} $color={colors.vol35}>
            M35:79889
          </LegendItem>
          <LegendItem $width={220} $size={35} $color={colors.vol10}>
            M10:10.29万
          </LegendItem>
        </VolumeLegendRow>
        <VolumeLegendRow $lift={3}>
          <LegendItem $width={195} $size={35} $color={colors.vol60} $tight={-0.3}>
            M60:81741
          </LegendItem>
          <LegendItem $width={119} $size={35}>
            换手率:
          </LegendItem>
          <LegendItem $width={60} $size={35} $color="#4aa8e0">
            −−
          </LegendItem>
        </VolumeLegendRow>
      </VolumeLegend>
    </VolumePanel>

    <Band />

    <InfoTabs>
      <InfoTab $width={161} $active>
        新闻
      </InfoTab>
      <InfoTab $width={153}>社区</InfoTab>
      <InfoTab $width={240}>关联股票</InfoTab>
      <InfoTab $width={259}>简况(F10)</InfoTab>
      <InfoTab $width={165}>
        基金
        <Dot $size={12} />
      </InfoTab>
      <InfoTab $width={88}>成交</InfoTab>
    </InfoTabs>

    <BottomBar>
      <BottomItem>
        <svg width="52" height="58" fill="none" stroke="currentColor" strokeWidth="3">
          <path d="M7 2.500H45Q49 2.500 49 7V43L38 55H7Q2.500 55 2.500 50V7Q2.500 2.500 7 2.500Z" />
          <path d="M9 16H43M9 23H43M9 30H43M9 37H33" />
        </svg>
        下单
      </BottomItem>
      <BottomItem>
        <svg width="52" height="58" fill="none" stroke="currentColor" strokeWidth="2.600">
          <rect x="3" y="5" width="46" height="47" />
          <path d="M13 28.500H39M26 15.500V41.500" />
        </svg>
        加自选
      </BottomItem>
      <BottomItem>
        <svg width="52" height="58" fill="none" stroke="currentColor" strokeWidth="2.800">
          <circle cx="26" cy="28.500" r="24.300" />
          <path d="M15 22H37M15 36H37" />
        </svg>
        功能
        <Dot $size={18} />
      </BottomItem>
    </BottomBar>

    <SideHandle>
      <Dot $size={12} $color="#999" />
      <Dot $size={12} $color="#999" />
      <Dot $size={12} $color="#999" />
    </SideHandle>
  </Page>
);

export default App;
